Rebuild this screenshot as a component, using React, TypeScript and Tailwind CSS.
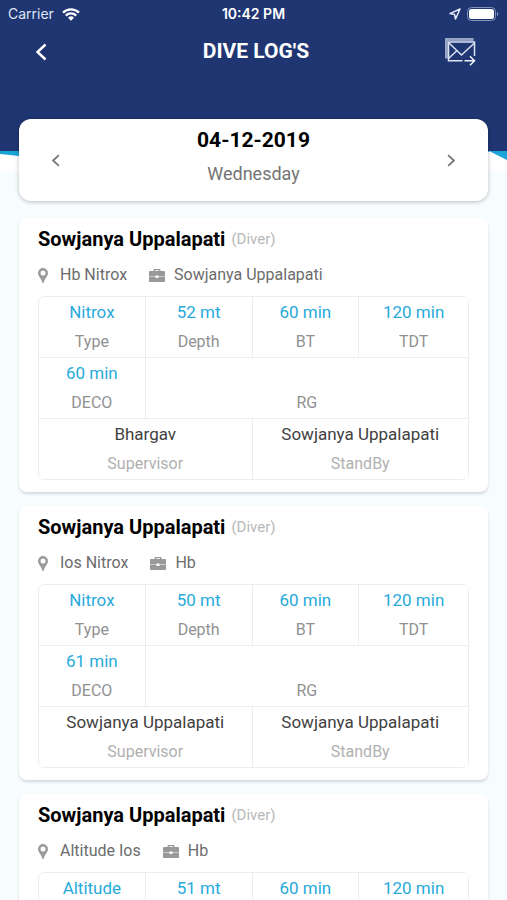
interface IDive {
  id: number;
  diver: string;
  role: string;
  site: string;
  company: string;
  type: string;
  depth: string;
  bt: string;
  tdt: string;
  deco?: string;
  supervisor?: string;
  standBy?: string;
}

const dives: IDive[] = [
  {
    id: 1,
    diver: "Sowjanya Uppalapati",
    role: "(Diver)",
    site: "Hb Nitrox",
    company: "Sowjanya Uppalapati",
    type: "Nitrox",
    depth: "52 mt",
    bt: "60 min",
    tdt: "120 min",
    deco: "60 min",
    supervisor: "Bhargav",
    standBy: "Sowjanya Uppalapati",
  },
  {
    id: 2,
    diver: "Sowjanya Uppalapati",
    role: "(Diver)",
    site: "Ios Nitrox",
    company: "Hb",
    type: "Nitrox",
    depth: "50 mt",
    bt: "60 min",
    tdt: "120 min",
    deco: "61 min",
    supervisor: "Sowjanya Uppalapati",
    standBy: "Sowjanya Uppalapati",
  },
  {
    id: 3,
    diver: "Sowjanya Uppalapati",
    role: "(Diver)",
    site: "Altitude Ios",
    company: "Hb",
    type: "Altitude",
    depth: "51 mt",
    bt: "60 min",
    tdt: "120 min",
  },
];

function StatusBar() {
  return (
    <div className="grid h-7 grid-cols-[1fr_auto_1fr] items-center px-2 font-['Inter',sans-serif] text-sm">
      <div className="flex items-center gap-2 text-[#dfe6f5]">
        <span>Carrier</span>
        <svg width="18" height="13" viewBox="0 0 18 13" fill="none" stroke="#fff" strokeWidth="2.2">
          <path d="M1 4.6a11.4 11.4 0 0 1 16 0" />
          <path d="M3.8 7.6a7.4 7.4 0 0 1 10.4 0" />
          <path d="M6 9.8a4.3 4.3 0 0 1 6 0L9 12.8z" fill="#fff" stroke="none" />
        </svg>
      </div>
      <span className="font-semibold">10:42 PM</span>
      <div className="flex items-center justify-end gap-1.5">
        <svg width="12" height="12" viewBox="0 0 12 12" fill="none" stroke="#e6ecf8" strokeWidth="1.5" strokeLinejoin="round">
          <path d="M11 1 1 5.6l4.6.9.9 4.5z" />
        </svg>
        <svg width="32" height="14" viewBox="0 0 32 14">
          <rect x=".5" y=".5" width="28" height="13" rx="4" fill="none" stroke="#8391b7" />
          <rect x="2" y="2" width="25" height="10" rx="2.5" fill="#fff" />
          <path d="M30 4.8c1.8.7 1.8 3.7 0 4.4z" fill="#8391b7" />
        </svg>
      </div>
    </div>
  );
}

function MailIcon() {
  return (
    <svg width="31" height="28" viewBox="0 0 31 28" fill="none" strokeWidth="1.5">
      <path d="M1 20.5V1h27.5" stroke="#c3cde4" />
      <path d="M2.2 20.5V2.2h26.3" stroke="#8f9dc3" />
      <path d="M17.5 22.8h-14V4h26v14" stroke="#dce4f4" />
      <path d="m3.5 4.5 13 12.5L29.5 5M3.500 20.500l8-7.500" stroke="#dce4f4" />
      <path d="M19.500 22.800h9.500M25 18.300l4.500 4.500-4.500 4.500" stroke="#eef2fa" />
    </svg>
  );
}

function Chevron({ flip, size }: { flip?: boolean; size: "sm" | "lg" }) {
  return (
    <svg
      width={size === "lg" ? 11 : 8}
      height={size === "lg" ? 18 : 13}
      viewBox="0 0 11 18"
      fill="none"
      stroke="currentColor"
      strokeWidth="2.4"
    >
      <path d={flip ? "m1.5 1.5 8 7.5-8 7.5" : "m9.5 1.5-8 7.5 8 7.5"} />
    </svg>
  );
}

function PinIcon() {
  return (
    <svg className="shrink-0" width="10" height="15" viewBox="0 0 10 15">
      <path
        fill="#9b9b9b"
        fillRule="evenodd"
        d="M5 0a5 5 0 0 1 5 5c0 3-3.6 6-4.2 9.3a.8.8 0 0 1-1.6 0C3.6 11 0 8 0 5a5 5 0 0 1 5-5Zm0 2.4a2.5 2.5 0 1 0 0 5 2.5 2.5 0 0 0 0-5Z"
      />
    </svg>
  );
}

function BriefcaseIcon() {
  return (
    <svg className="shrink-0" width="16" height="13" viewBox="0 0 16 13" fill="#999">
      <path
        fillRule="evenodd"
        d="M4.5 2V1c0-.6.4-1 1-1h5c.6 0 1 .4 1 1v1H15c.6 0 1 .4 1 1v4.5H9.5v-1h-3v1H0V3c0-.6.4-1 1-1zM6 1.2V2h4v-.8z"
      />
      <path d="M0 8h6.5v1h3V8H16v4c0 .6-.4 1-1 1H1c-.6 0-1-.4-1-1z" />
    </svg>
  );
}

interface IStat {
  label: string;
  value?: string;
  span?: string;
  person?: boolean;
}

function Stat({ label, value, span = "col-span-1", person }: IStat) {
  return (
    <div
      className={`flex flex-col-reverse justify-end border-r border-b border-[#ededed] text-center ${span}`}
    >
      <dt className={`text-base/[30px] ${person ? "text-[#b0b0b0]" : "text-[#919191]"}`}>
        {label}
      </dt>
      <dd className={`min-h-[30px] text-[17px]/[30px] ${person ? "text-[#3f3f3f]" : "text-[#27aadb]"}`}>
        {value}
      </dd>
    </div>
  );
}

function DiveCard({ dive }: { dive: IDive }) {
  return (
    <article className="rounded-lg bg-white px-[19px] pt-1.5 pb-3 shadow-[0_2px_3px_rgba(0,0,0,0.14)]">
      <header className="flex items-center gap-1.5">
        <h2 className="text-xl/[30px] font-bold text-black">{dive.diver}</h2>
        <span className="text-[15px]/[30px] text-[#b8b8b8]">{dive.role}</span>
      </header>
      <div className="mt-1.5 flex items-center text-base/[30px] text-[#6c6c6c]">
        <PinIcon />
        <span className="ml-3">{dive.site}</span>
        <span className="ml-[22px] flex items-center gap-[9px]">
          <BriefcaseIcon />
          {dive.company}
        </span>
      </div>
      <dl className="mt-1.5 grid grid-cols-[36fr_36fr_36fr_37fr] overflow-hidden rounded-md border-t border-l border-[#ededed]">
        <Stat label="Type" value={dive.type} />
        <Stat label="Depth" value={dive.depth} />
        <Stat label="BT" value={dive.bt} />
        <Stat label="TDT" value={dive.tdt} />
        {dive.deco && (
          <>
            <Stat label="DECO" value={dive.deco} />
            <Stat label="RG" span="col-span-3" />
            <Stat label="Supervisor" value={dive.supervisor} span="col-span-2" person />
            <Stat label="StandBy" value={dive.standBy} span="col-span-2" person />
          </>
        )}
      </dl>
    </article>
  );
}

export default function App() {
  return (
    <div className="flex min-h-screen flex-col bg-[#f7fcff] font-['Roboto',sans-serif]">
      <header className="bg-[#1f3672] pb-[75px] text-white">
        <StatusBar />
        <div className="grid h-12 grid-cols-[1fr_auto_1fr] items-center pr-[31px] pl-9">
          <button type="button" aria-label="Back" className="w-fit">
            <Chevron size="lg" />
          </button>
          <h1 className="text-[21px] font-bold">DIVE LOG'S</h1>
          <button type="button" aria-label="Send by mail" className="justify-self-end">
            <MailIcon />
          </button>
        </div>
      </header>
      <svg className="h-5 w-full shrink-0" viewBox="0 0 507 20" preserveAspectRatio="none">
        <path d="M0 0h507v20H0z" fill="#fff" />
        <path d="M0 0h507v9L489 0v1L19 5 0 3z" fill="#1ba4d8" />
      </svg>

      <main className="z-10 -mt-[52px] flex flex-col px-[19px] pb-3.5">
        <section className="flex h-[82px] items-center justify-between rounded-xl bg-white px-[33px] shadow-[0_1px_4px_rgba(0,0,0,0.25)]">
          <button type="button" aria-label="Previous day" className="text-[#777]">
            <Chevron size="sm" />
          </button>
          <div className="self-start pt-1 text-center">
            <p className="text-[21px]/[34px] font-bold text-black">04-12-2019</p>
            <p className="text-lg/[34px] text-[#747474]">Wednesday</p>
          </div>
          <button type="button" aria-label="Next day" className="text-[#777]">
            <Chevron size="sm" flip />
          </button>
        </section>
        <div className="mt-[17px] flex flex-col gap-3.5">
          {dives.map((dive) => (
            <DiveCard key={dive.id} dive={dive} />
          ))}
        </div>
      </main>
    </div>
  );
}
